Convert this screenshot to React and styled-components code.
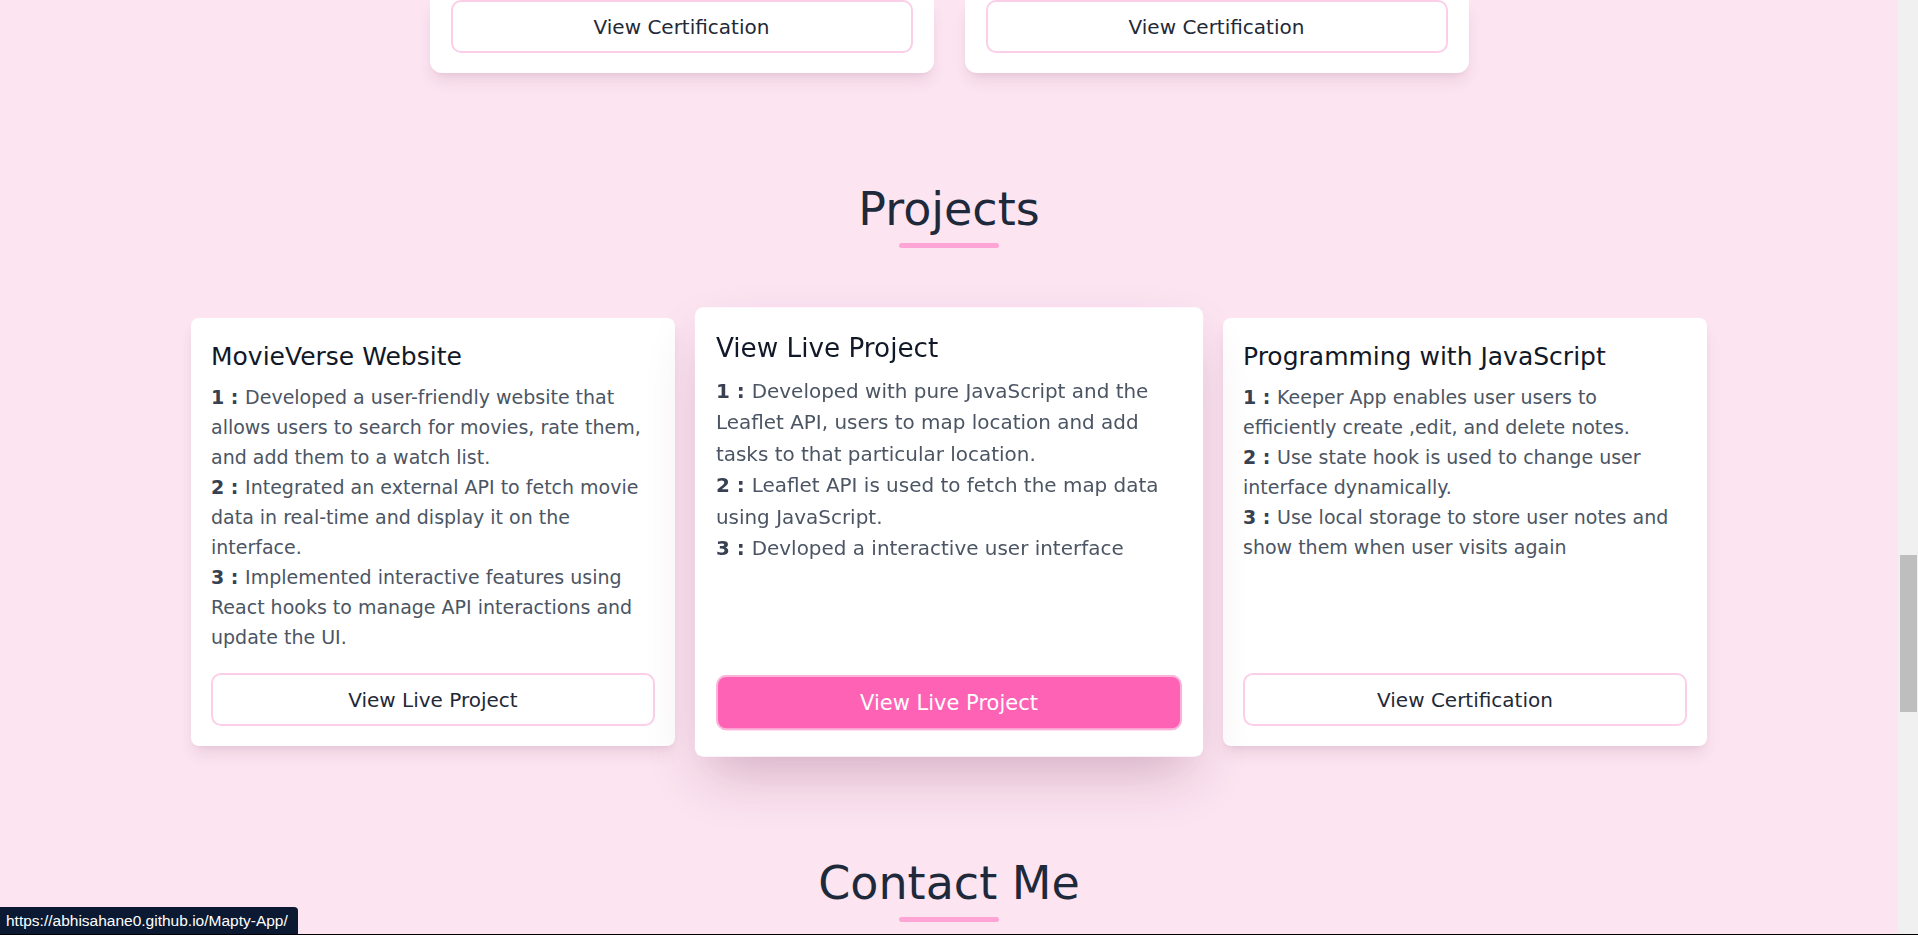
import React from 'react'
import styled, { createGlobalStyle } from 'styled-components'

const projects = [
  {
    title: 'MovieVerse Website',
    points: [
      ['Developed a user-friendly website that', 'allows users to search for movies, rate them,', 'and add them to a watch list.'],
      ['Integrated an external API to fetch movie', 'data in real-time and display it on the', 'interface.'],
      ['Implemented interactive features using', 'React hooks to manage API interactions and', 'update the UI.'],
    ],
    action: 'View Live Project',
  },
  {
    title: 'View Live Project',
    points: [
      ['Developed with pure JavaScript and the', 'Leaflet API, users to map location and add', 'tasks to that particular location.'],
      ['Leaflet API is used to fetch the map data', 'using JavaScript.'],
      ['Devloped a interactive user interface'],
    ],
    action: 'View Live Project',
    active: true,
  },
  {
    title: 'Programming with JavaScript',
    points: [
      ['Keeper App enables user users to', 'efficiently create ,edit, and delete notes.'],
      ['Use state hook is used to change user', 'interface dynamically.'],
      ['Use local storage to store user notes and', 'show them when user visits again'],
    ],
    action: 'View Certification',
  },
]

export default () => {
  return (
    <>
      <GlobalStyle />
      <Page>
        <Main>
          <CertRow>
            <CertCard>
              <OutlineBtn>View Certification</OutlineBtn>
            </CertCard>
            <CertCard>
              <OutlineBtn>View Certification</OutlineBtn>
            </CertCard>
          </CertRow>

          <SectionHeading>
            <HeadingText>Projects</HeadingText>
            <Underline />
          </SectionHeading>

          <ProjectGrid>
            {projects.map((p) => (
              <ProjectCard key={p.title} $active={p.active}>
                <CardTitle>{p.title}</CardTitle>
                <PointList>
                  {p.points.map((lines, i) => (
                    <Point key={i}>
                      {lines.map((line, j) => (
                        <Line key={j}>
                          {j === 0 && <Num>{i + 1} : </Num>}
                          <span>{line}</span>
                        </Line>
                      ))}
                    </Point>
                  ))}
                </PointList>
                <OutlineBtn $filled={p.active}>{p.action}</OutlineBtn>
              </ProjectCard>
            ))}
          </ProjectGrid>

          <ContactHeading>
            <HeadingText>Contact Me</HeadingText>
            <Underline />
          </ContactHeading>
        </Main>
        <ScrollTrack>
          <ScrollThumb />
        </ScrollTrack>
      </Page>
      <StatusBar>https://abhisahane0.github.io/Mapty-App/</StatusBar>
    </>
  )
}

const GlobalStyle = createGlobalStyle`
  html, body {
    margin: 0;
    padding: 0;
    overflow: hidden;
    background: #fce4f1;
  }
  body {
    font-family: "DejaVu Sans", "Noto Sans", sans-serif;
    color: #1f2937;
  }
  * { box-sizing: border-box; }
`

const Page = styled.div`
  display: flex;
  flex-direction: row;
  height: 935px;
  border-bottom: 1px solid #000;
`

const Main = styled.main`
  flex: 1;
  display: flex;
  flex-direction: column;
  align-items: center;
  overflow: hidden;
`

const ScrollTrack = styled.div`
  width: 20px;
  background: #f0f0f0;
  padding: 555px 1px 0 2px;
`

const ScrollThumb = styled.div`
  height: 157px;
  background: #bebebe;
`

const CertRow = styled.div`
  display: flex;
  gap: 31px;
`

const CertCard = styled.div`
  width: 504px;
  padding: 0 21px 20px;
  background: #fff;
  border-radius: 0 0 12px 12px;
  box-shadow: 0 10px 15px -3px rgba(120, 60, 90, 0.12), 0 4px 6px -4px rgba(120, 60, 90, 0.12);
  display: flex;
  flex-direction: column;
`

const OutlineBtn = styled.button`
  width: 100%;
  height: 53px;
  margin-top: auto;
  border: 2px solid ${(p) => (p.$filled ? '#fbb4da' : '#fbcfe8')};
  border-radius: 10px;
  background: ${(p) => (p.$filled ? '#fe62b5' : '#fff')};
  color: ${(p) => (p.$filled ? '#fff' : '#1f2937')};
  font-family: inherit;
  font-size: 20px;
  cursor: pointer;
  transform: ${(p) => (p.$filled ? 'translateY(-5px)' : 'none')};
`

const SectionHeading = styled.div`
  display: flex;
  flex-direction: column;
  align-items: center;
  margin-top: 108px;
`

const ContactHeading = styled(SectionHeading)`
  margin-top: 109px;
`

const HeadingText = styled.h2`
  margin: 0;
  font-size: 46px;
  line-height: 56px;
  font-weight: 400;
  color: #1e293b;
`

const Underline = styled.div`
  width: 100px;
  height: 5px;
  margin-top: 6px;
  border-radius: 3px;
  background: #ffa5d6;
`

const ProjectGrid = styled.div`
  display: grid;
  grid-template-columns: repeat(3, 484px);
  gap: 32px;
  margin-top: 70px;
`

const ProjectCard = styled.div`
  height: 428px;
  padding: 20px;
  background: #fff;
  border-radius: 8px;
  display: flex;
  flex-direction: column;
  box-shadow: ${(p) =>
    p.$active
      ? '0 25px 50px -12px rgba(110, 40, 80, 0.3)'
      : '0 10px 15px -3px rgba(120, 60, 90, 0.12), 0 4px 6px -4px rgba(120, 60, 90, 0.12)'};
  transform: ${(p) => (p.$active ? 'scale(1.05)' : 'none')};
`

const CardTitle = styled.h3`
  margin: 3px 0 9px;
  font-size: 25px;
  line-height: 32px;
  font-weight: 500;
  color: #111827;
`

const PointList = styled.div`
  display: flex;
  flex-direction: column;
`

const Point = styled.div`
  display: flex;
  flex-direction: column;
`

const Line = styled.p`
  margin: 0;
  font-size: 19px;
  line-height: 30px;
  color: #4b5563;
  white-space: nowrap;
`

const Num = styled.span`
  font-weight: 700;
  color: #374151;
`

const StatusBar = styled.div`
  position: fixed;
  left: 0;
  bottom: 1px;
  height: 27px;
  padding: 0 10px 0 6px;
  display: flex;
  align-items: center;
  background: #0b1a32;
  color: #fff;
  font-family: "Liberation Sans", Arial, sans-serif;
  font-size: 15.5px;
  border-top-right-radius: 4px;
`
